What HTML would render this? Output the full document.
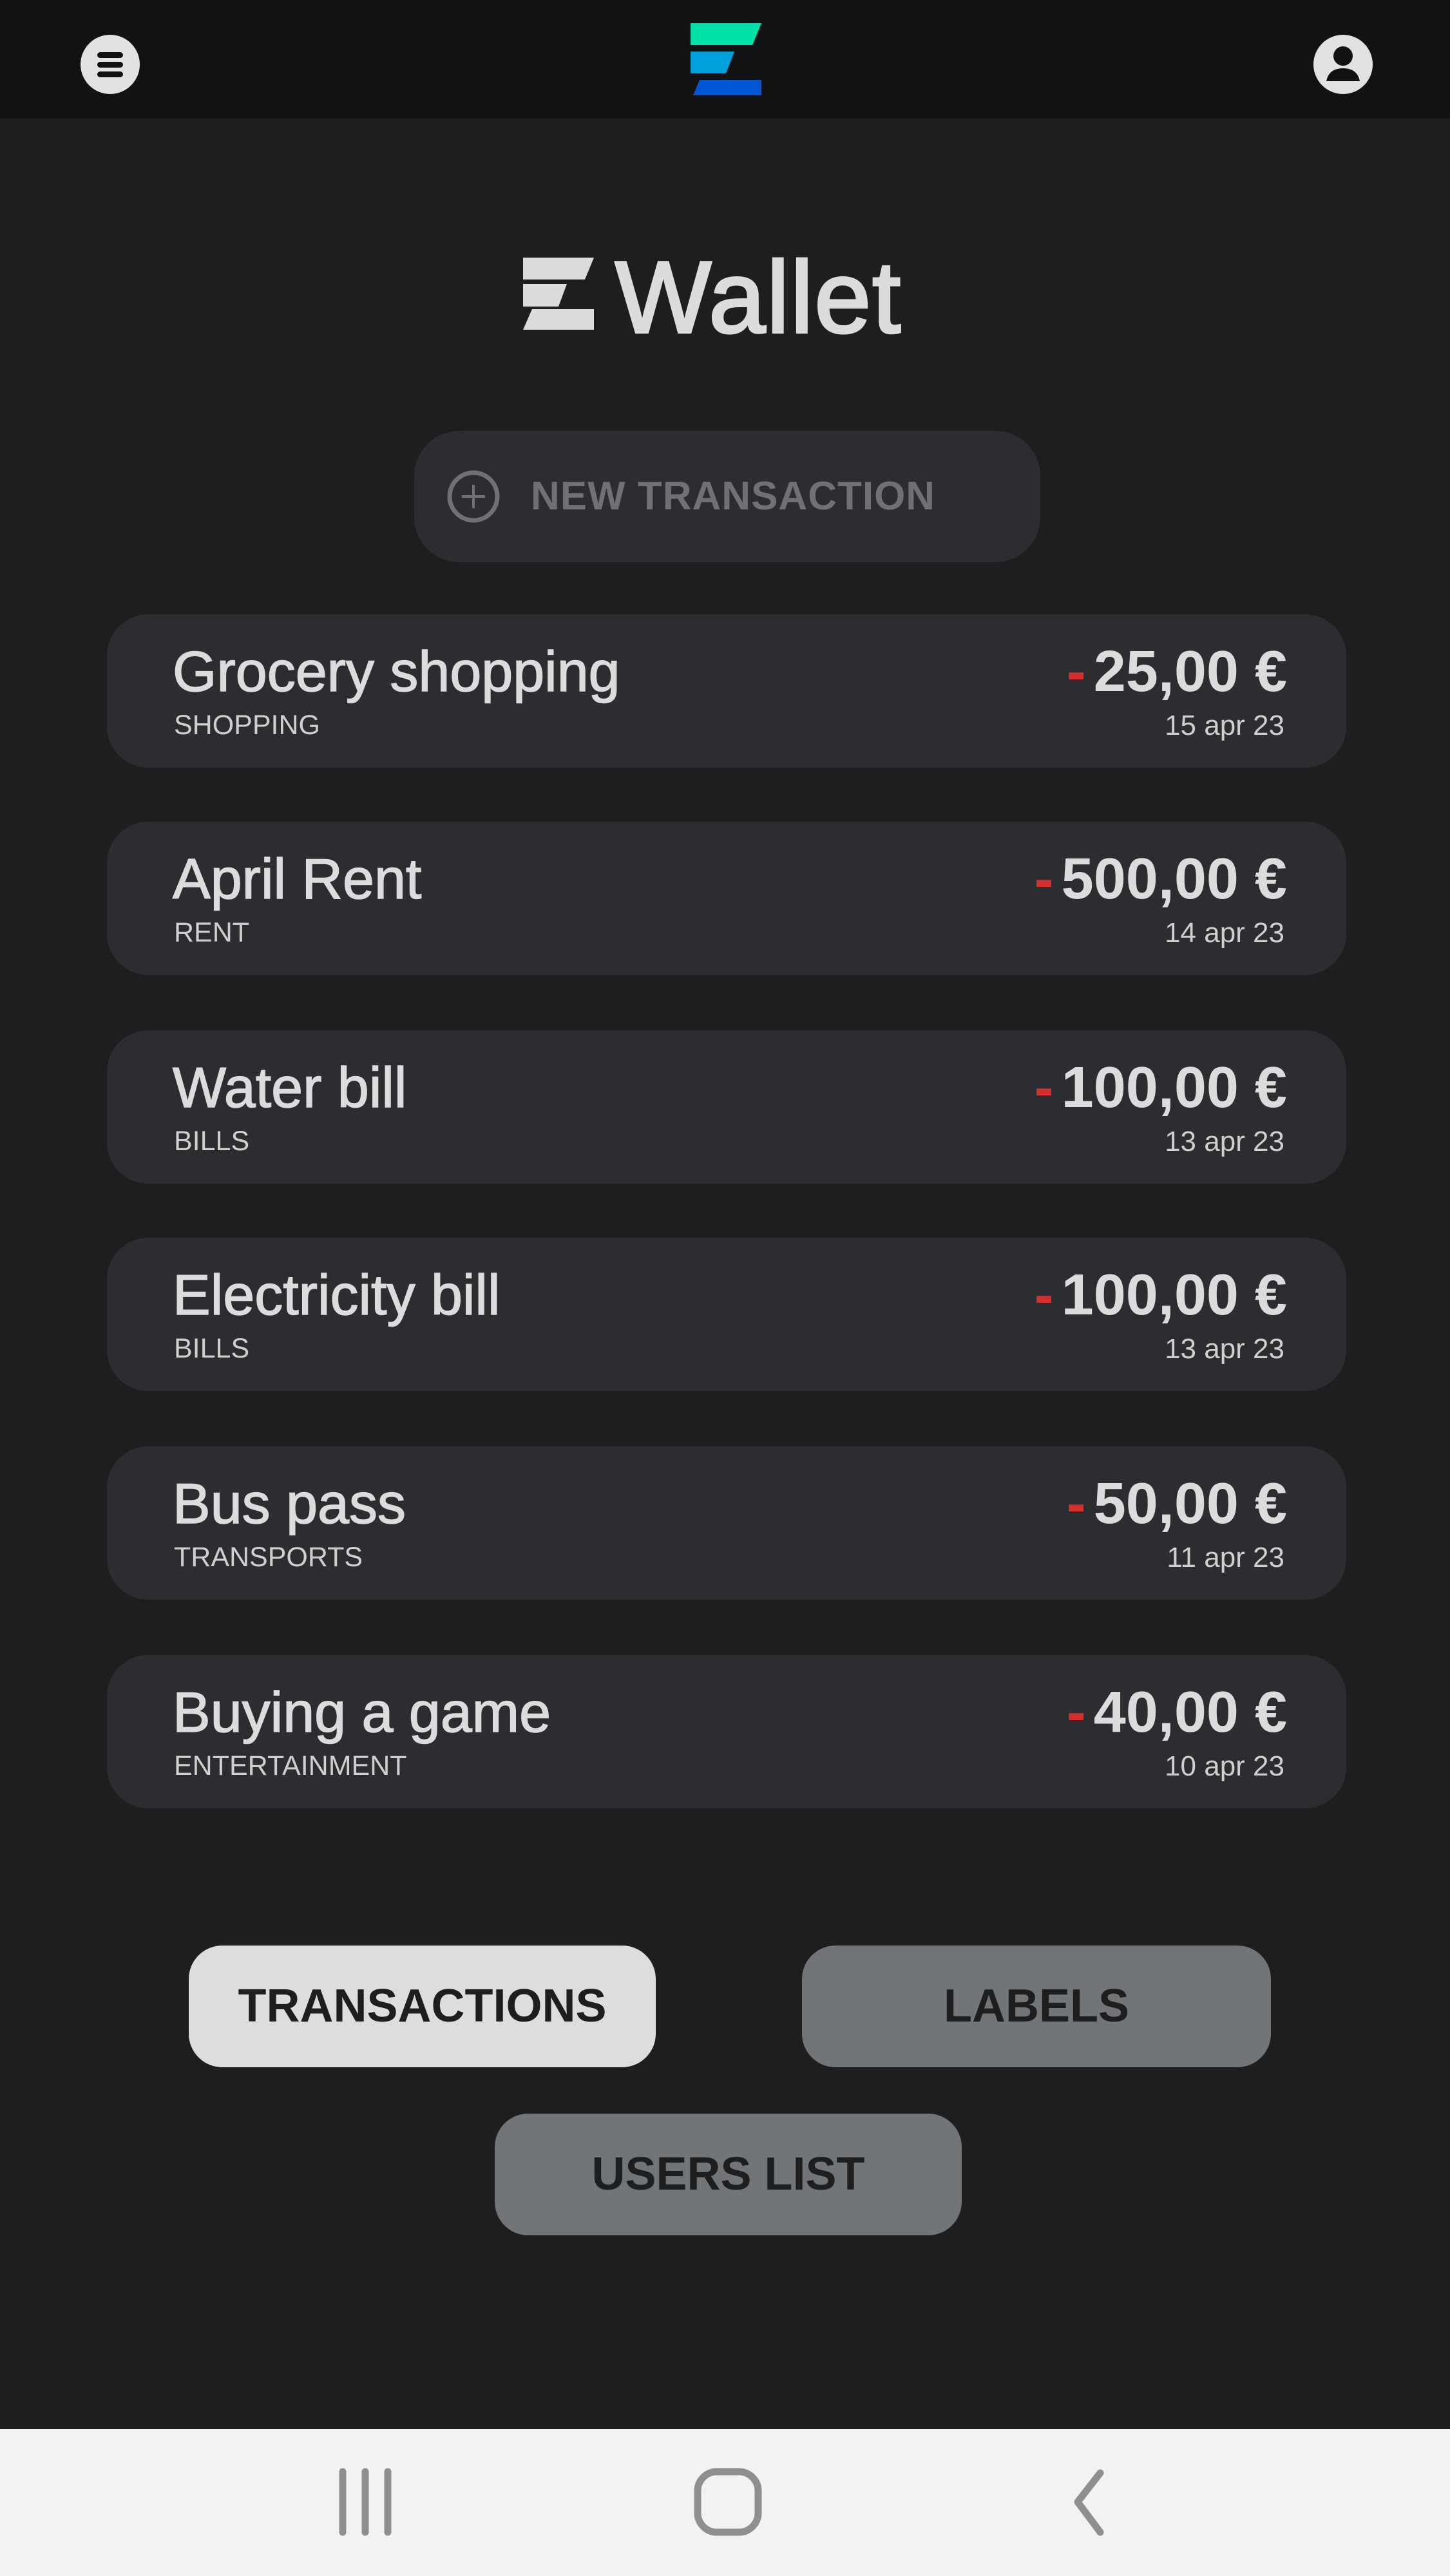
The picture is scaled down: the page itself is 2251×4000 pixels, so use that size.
<!DOCTYPE html>
<html><head><meta charset="utf-8"><style>
*{margin:0;padding:0;box-sizing:border-box}
html,body{width:2251px;height:4000px;overflow:hidden;background:#1e1e1e;font-family:"Liberation Sans",sans-serif}
.abs{position:absolute}
.hdr{left:0;top:0;width:2251px;height:184px;background:#111214}
.card{position:absolute;left:166px;width:1924px;height:238px;background:#2c2d31;border-radius:64px}
.t{position:absolute;left:102px;top:38px;font-size:88px;color:#dcdcdc;white-space:nowrap;-webkit-text-stroke:1.5px #dcdcdc}
.s{position:absolute;left:104px;top:148px;font-size:43px;color:#cfcfcf;white-space:nowrap}
.a{position:absolute;right:92px;top:38px;font-size:90px;font-weight:bold;color:#dcdcdc;white-space:nowrap}
.a b{color:#d32f2f;margin-right:12px}
.d{position:absolute;right:96px;top:148px;font-size:44px;color:#cfcfcf;white-space:nowrap}
.btn{position:absolute;height:189px;border-radius:52px;font-weight:bold;font-size:72px;color:#1e1e1e;text-align:center;line-height:189px}
.nav{left:0;top:3772px;width:2251px;height:228px;background:#f2f2f2}
</style></head><body>
<div class="abs hdr"></div>
<svg class="abs" style="left:125px;top:54px" width="92" height="92" viewBox="0 0 92 92"><circle cx="46" cy="46" r="46" fill="#e2e2e2"/><rect x="26" y="27" width="40" height="9" rx="4.5" fill="#111"/><rect x="26" y="42" width="40" height="9" rx="4.5" fill="#111"/><rect x="26" y="57" width="40" height="9" rx="4.5" fill="#111"/></svg>
<svg class="abs" style="left:1072px;top:36px" width="112" height="112" viewBox="0 0 112 112"><polygon points="0,0 110,0 96,34 0,34" fill="#00e0a8"/><polygon points="0,44 68,44 55,78 0,78" fill="#00a0dd"/><polygon points="14,88 110,88 110,112 4,112" fill="#0055d4"/></svg>
<svg class="abs" style="left:2039px;top:54px" width="92" height="92" viewBox="0 0 92 92"><circle cx="46" cy="46" r="46" fill="#e2e2e2"/><circle cx="46" cy="33" r="15" fill="#111"/><path d="M20 72 Q24 52 46 52 Q68 52 72 72 Z" fill="#111"/></svg>

<svg class="abs" style="left:812px;top:400px" width="110" height="112" viewBox="0 0 110 112"><polygon points="0,0 110,0 96,34 0,34" fill="#dcdcdc"/><polygon points="0,41 68,41 55,76 0,76" fill="#dcdcdc"/><polygon points="14,80 110,80 110,112 0,112" fill="#dcdcdc"/></svg>
<div class="abs" style="left:955px;top:372px;font-size:158px;color:#dcdcdc;line-height:180px;-webkit-text-stroke:4px #dcdcdc;letter-spacing:2px">Wallet</div>

<div class="abs" style="left:643px;top:669px;width:972px;height:204px;background:#2c2d31;border-radius:70px"></div>
<svg class="abs" style="left:693px;top:729px" width="84" height="84" viewBox="0 0 84 84"><circle cx="42" cy="42" r="37" fill="none" stroke="#6f7174" stroke-width="7"/><path d="M42 24V60M24 42H60" stroke="#6f7174" stroke-width="4"/></svg>
<div class="abs" style="left:824px;top:734px;font-size:62px;font-weight:bold;color:#6f7174;line-height:74px;white-space:nowrap;letter-spacing:1px">NEW TRANSACTION</div>

<div class="card" style="top:954px"><div class="t">Grocery shopping</div><div class="s">SHOPPING</div><div class="a"><b>-</b>25,00 €</div><div class="d">15 apr 23</div></div>
<div class="card" style="top:1276px"><div class="t">April Rent</div><div class="s">RENT</div><div class="a"><b>-</b>500,00 €</div><div class="d">14 apr 23</div></div>
<div class="card" style="top:1600px"><div class="t">Water bill</div><div class="s">BILLS</div><div class="a"><b>-</b>100,00 €</div><div class="d">13 apr 23</div></div>
<div class="card" style="top:1922px"><div class="t">Electricity bill</div><div class="s">BILLS</div><div class="a"><b>-</b>100,00 €</div><div class="d">13 apr 23</div></div>
<div class="card" style="top:2246px"><div class="t">Bus pass</div><div class="s">TRANSPORTS</div><div class="a"><b>-</b>50,00 €</div><div class="d">11 apr 23</div></div>
<div class="card" style="top:2570px"><div class="t">Buying a game</div><div class="s">ENTERTAINMENT</div><div class="a"><b>-</b>40,00 €</div><div class="d">10 apr 23</div></div>

<div class="btn" style="left:293px;top:3021px;width:725px;background:#dddddd">TRANSACTIONS</div>
<div class="btn" style="left:1245px;top:3021px;width:728px;background:#727578">LABELS</div>
<div class="btn" style="left:768px;top:3282px;width:725px;background:#727578">USERS LIST</div>

<div class="abs nav"></div>
<svg class="abs" style="left:510px;top:3820px" width="120" height="140" viewBox="0 0 120 140"><path d="M22 18V112M57 18V112M92 18V112" stroke="#8f8f8f" stroke-width="11" stroke-linecap="round"/></svg>
<svg class="abs" style="left:1070px;top:3820px" width="120" height="140" viewBox="0 0 120 140"><rect x="13" y="18" width="94" height="94" rx="30" fill="none" stroke="#8f8f8f" stroke-width="11"/></svg>
<svg class="abs" style="left:1630px;top:3820px" width="120" height="140" viewBox="0 0 120 140"><path d="M78 20L43 65L78 112" fill="none" stroke="#8f8f8f" stroke-width="11" stroke-linecap="round" stroke-linejoin="round"/></svg>
</body></html>
